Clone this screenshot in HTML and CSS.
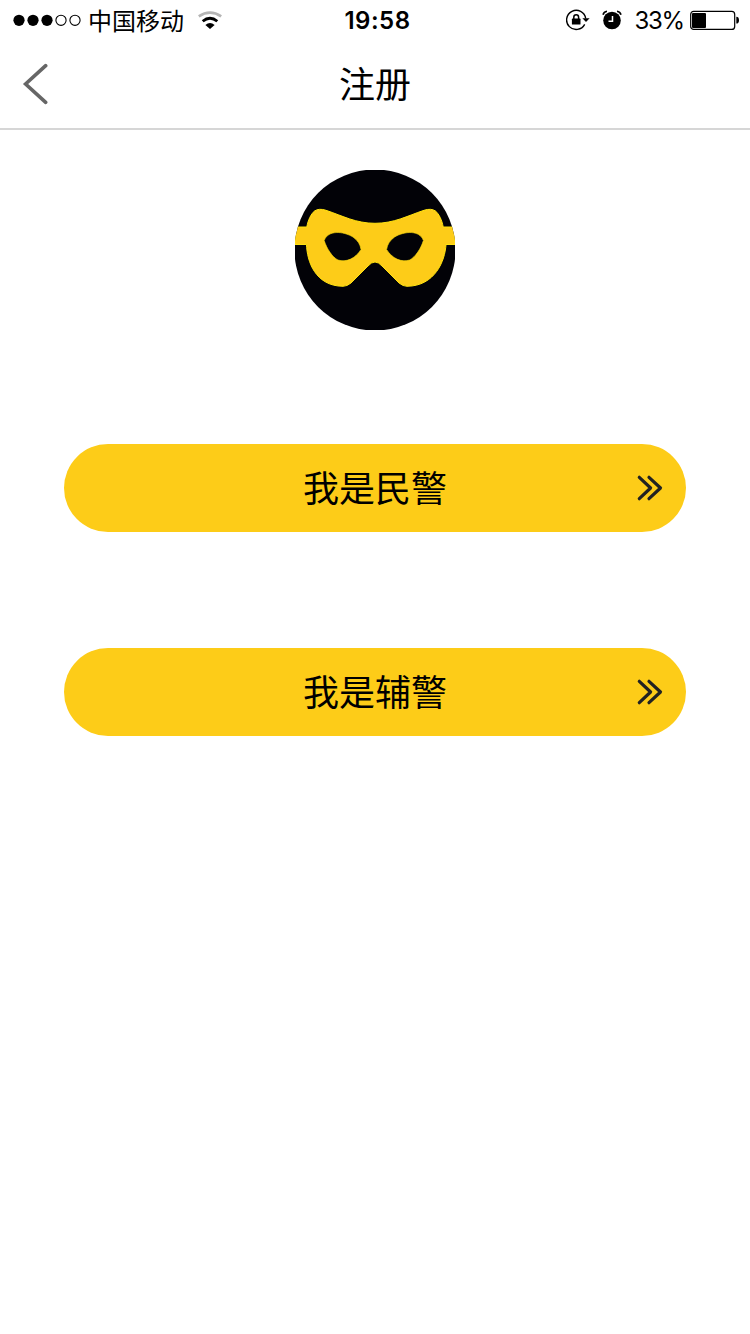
FILE: index.html
```html
<!DOCTYPE html>
<html lang="zh-CN">
<head>
    <meta charset="utf-8">
    <meta name="viewport" content="width=device-width, initial-scale=1.0">
    <title>注册</title>
    <link rel="stylesheet" href="styles.css">
</head>
<body>
    <div class="status-bar">
        <div class="status-left">
            <svg class="signal" width="68" height="12" viewBox="0 0 68 12">
                <circle cx="6" cy="6.3" r="5.6"/>
                <circle cx="20" cy="6.3" r="5.6"/>
                <circle cx="34" cy="6.3" r="5.6"/>
                <circle class="empty" cx="48" cy="6.3" r="5.1"/>
                <circle class="empty" cx="62" cy="6.3" r="5.1"/>
            </svg>
            <span class="carrier">中国移动</span>
            <svg class="wifi" width="24" height="18" viewBox="0 0 24 18">
                <path d="M.8 5.3Q12-2.2 23.2 5.3" fill="none" stroke="#b5b5b5" stroke-width="2.7"/>
                <path d="M4.7 10.3Q12 4.1 19.3 10.3" fill="none" stroke="#000" stroke-width="2.8"/>
                <path d="M7.4 13.9Q12 10 16.6 13.9L12 18z"/>
            </svg>
        </div>
        <span class="time">19:58</span>
        <div class="status-right">
            <svg class="lock" width="24" height="22" viewBox="0 0 24 22">
                <path d="M18.7 15.4A9.6 9.6 0 1 1 19.7 9.5" fill="none" stroke="#000" stroke-width="1.4"/>
                <path d="M16.4 9.2H23.6L20 12.9z"/>
                <rect x="5.9" y="9.6" width="8.6" height="6" rx=".6"/>
                <path d="M7.8 10V8.2a2.4 2.4 0 0 1 4.8 0v2" fill="none" stroke="#000" stroke-width="1.5"/>
            </svg>
            <svg class="alarm" width="20" height="20" viewBox="0 0 20 20">
                <circle cx="10" cy="10.5" r="8.8"/>
                <path d="M10.5 6v5.2H6.5" fill="none" stroke="#fff" stroke-width="1.5"/>
                <path d="M1 4.8Q1.8 1.6 5 1.2M19 4.8Q18.2 1.6 15 1.2" fill="none" stroke="#000" stroke-width="1.6"/>
            </svg>
            <span class="percent">33%</span>
            <svg class="battery" width="50" height="20" viewBox="0 0 50 20">
                <rect x=".7" y="1.4" width="44" height="18" rx="3" fill="none" stroke="#000" stroke-width="1.2"/>
                <rect x="2" y="3" width="14" height="15" rx="1"/>
                <path d="M46.3 6.8Q49 6.8 49 10.2T46.3 13.6z"/>
            </svg>
        </div>
    </div>

    <header class="nav">
        <svg class="back" width="26" height="44" viewBox="0 0 26 44">
            <path d="M23.7 3.7L3.6 22L23.7 40.3" />
        </svg>
        <h1>注册</h1>
    </header>

    <main>
        <svg class="logo" width="160" height="160" viewBox="0 0 160 160">
            <defs>
                <clipPath id="face"><circle cx="80" cy="80" r="80.5"/></clipPath>
            </defs>
            <g clip-path="url(#face)">
                <rect width="160" height="160" fill="#020207"/>
                <path class="mask" d="M0 57H11.8C13 50 16 44 19.5 41Q24 38 31 40.3C48 46 61 53.3 80 53.3S112 46 129 40.3Q136 38 140.5 41C144 44 147 50 148.2 57H160V74.5H151C150 91 140 116 112 116.3Q108 116.3 104 113L87 96Q80 88 73 96L56 113Q52 116.3 48 116.3C20 116 12 91 11.5 74.5H0z"/>
                <path id="eye" class="eye" d="M29.2 70.5C33 60 48 61 58 67Q65 72 66 79.5C60 89 51 92.5 43 90C37 87 31.5 78 29.2 70.5z"/>
                <use href="#eye" transform="translate(157.6 0) scale(-1 1)"/>
            </g>
        </svg>

        <button class="role-btn">
            <span>我是民警</span>
            <svg class="arrows" width="26" height="26" viewBox="0 0 26 26">
                <path d="M2.3 2.3L13.6 13L2.3 23.7M12 2.3L23.5 13L12 23.7"/>
            </svg>
        </button>
        <button class="role-btn">
            <span>我是辅警</span>
            <svg class="arrows" width="26" height="26" viewBox="0 0 26 26">
                <path d="M2.3 2.3L13.6 13L2.3 23.7M12 2.3L23.5 13L12 23.7"/>
            </svg>
        </button>
    </main>
</body>
</html>
```
FILE: styles.css
```css
* {
    box-sizing: border-box;
}

body {
    margin: 0;
    min-height: 100vh;
    background-color: #fff;
    color: #000;
    font-family: Inter, "Noto Sans CJK SC", sans-serif;
}

svg {
    display: block;
    flex: none;
}

/* status bar */
.status-bar {
    display: grid;
    grid-template-columns: 1fr auto 1fr;
    grid-template-rows: 40px;
    align-items: center;
    height: 40px;
    padding: 0 10px 0 13px;
    font-size: 24px;
    line-height: 40px;
}

.status-left, .status-right {
    display: flex;
    align-items: center;
    height: 40px;
}

.status-right {
    justify-content: flex-end;
}

.signal .empty {
    fill: none;
    stroke: #000;
    stroke-width: 1.1;
}

.carrier {
    margin-left: 7px;
    font-family: "Noto Sans CJK SC", sans-serif;
    font-weight: 400;
}

.wifi {
    margin-left: 14px;
}

.time {
    margin-left: 2px;
    padding-top: 2px;
    font-weight: 600;
    font-size: 24px;
    letter-spacing: 0.5px;
}

.alarm {
    margin-left: 12px;
}

.percent {
    margin-left: 12px;
    padding-top: 2px;
    letter-spacing: -1.2px;
}

.battery {
    margin-left: 6px;
}

/* title bar */
.nav {
    display: grid;
    grid-template-columns: 80px 1fr 80px;
    align-items: center;
    height: 90px;
    border-bottom: 2px solid #d6d6d6;
}

.back {
    margin-left: 22px;
}

.back path {
    fill: none;
    stroke: #666;
    stroke-width: 3.6;
    stroke-linecap: round;
}

.nav h1 {
    margin: 0;
    padding-top: 2px;
    font-size: 36px;
    font-weight: 400;
    line-height: 86px;
    text-align: center;
}

main {
    display: flex;
    flex-direction: column;
    align-items: center;
    padding: 40px 64px 0;
}

.logo {
    margin-bottom: 114px;
}

.mask {
    fill: #fdcc18;
    stroke: #ffe30f;
    stroke-width: 1;
}

.eye {
    fill: #020207;
    stroke: #ffe30f;
    stroke-width: 0.6;
}

.role-btn {
    display: grid;
    grid-template-columns: 26px 1fr 26px;
    align-items: center;
    width: 100%;
    height: 88px;
    margin-bottom: 116px;
    padding: 0 23px;
    border: none;
    border-radius: 44px;
    background-color: #fdcc18;
    color: #000;
    font-family: "Noto Sans CJK SC", sans-serif;
    font-size: 36px;
    line-height: 84px;
}

.role-btn span {
    grid-column: 2;
    padding-bottom: 4px;
}

.arrows path {
    fill: none;
    stroke: #222;
    stroke-width: 3.2;
    stroke-linecap: round;
    stroke-linejoin: round;
}
```
